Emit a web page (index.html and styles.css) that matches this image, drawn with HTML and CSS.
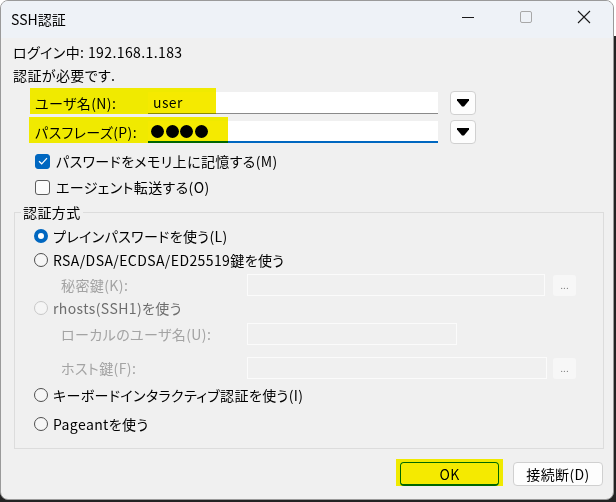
FILE: index.html
```html
<!DOCTYPE html>
<html lang="ja">
<head>
<meta charset="utf-8">
<title>SSH認証</title>
<link rel="stylesheet" href="styles.css">
</head>
<body>
<div class="window">
  <div class="titlebar">
    <span class="title">SSH認証</span>
    <div class="controls">
      <div class="ctl"><svg width="14" height="14" viewBox="0 0 14 14"><path d="M1 7.5H13" stroke="#1a1a1a" stroke-width="1"/></svg></div>
      <div class="ctl"><svg width="14" height="14" viewBox="0 0 14 14"><rect x="1.5" y="1.5" width="11" height="11" rx="1.5" fill="none" stroke="#a8a8a8" stroke-width="1"/></svg></div>
      <div class="ctl"><svg width="14" height="14" viewBox="0 0 14 14"><path d="M1 1L13 13M13 1L1 13" stroke="#1a1a1a" stroke-width="1.1"/></svg></div>
    </div>
  </div>
  <div class="content">
    <div class="line">ログイン中: 192.168.1.183</div>
    <div class="line">認証が必要です.</div>

    <div class="field-row">
      <span class="mark mark-user"></span>
      <span class="flabel">ユーザ名(N):</span>
      <div class="input">user</div>
      <div class="drop"><svg width="12" height="8" viewBox="0 0 12 8"><path d="M0 0H12V1.5L7 7.5H5L0 1.5Z" fill="#000"/></svg></div>
    </div>
    <div class="field-row row2">
      <span class="mark mark-pass"></span>
      <span class="flabel">パスフレーズ(P):</span>
      <div class="input focused"><span class="dot"></span><span class="dot"></span><span class="dot"></span><span class="dot"></span></div>
      <div class="drop"><svg width="12" height="8" viewBox="0 0 12 8"><path d="M0 0H12V1.5L7 7.5H5L0 1.5Z" fill="#000"/></svg></div>
    </div>

    <div class="check-row first">
      <span class="box checked"><svg width="10" height="8" viewBox="0 0 10 8"><path d="M1 4.2L3.7 6.8L9 1.2" fill="none" stroke="#fff" stroke-width="1.2"/></svg></span>
      <span>パスワードをメモリ上に記憶する(M)</span>
    </div>
    <div class="check-row">
      <span class="box"></span>
      <span>エージェント転送する(O)</span>
    </div>

    <fieldset class="group">
      <legend>認証方式</legend>
      <div class="opt r1"><span class="radio on"></span><span>プレインパスワードを使う(L)</span></div>
      <div class="opt r2"><span class="radio"></span><span>RSA/DSA/ECDSA/ED25519鍵を使う</span></div>
      <div class="sub r3"><span class="slabel">秘密鍵(K):</span><div class="dis-input wide"></div><div class="dots-btn">...</div></div>
      <div class="opt r4 disabled"><span class="radio off"></span><span>rhosts(SSH1)を使う</span></div>
      <div class="sub r5"><span class="slabel">ローカルのユーザ名(U):</span><div class="dis-input short"></div></div>
      <div class="sub r6"><span class="slabel">ホスト鍵(F):</span><div class="dis-input wide2"></div><div class="dots-btn">...</div></div>
      <div class="opt r7"><span class="radio"></span><span>キーボードインタラクティブ認証を使う(I)</span></div>
      <div class="opt r8"><span class="radio"></span><span>Pageantを使う</span></div>
    </fieldset>

    <div class="buttons">
      <div class="ok-wrap">
        <span class="mark mark-ok"></span>
        <div class="btn ok">OK</div>
      </div>
      <div class="btn">接続断(D)</div>
    </div>
  </div>
</div>
</body>
</html>
```

FILE: styles.css
```css
html, body {
  margin: 0;
  padding: 0;
}
body {
  width: 616px;
  height: 502px;
  background: linear-gradient(#ffffff 0, #ffffff 36px, #232323 36px);
  font-family: "Noto Sans CJK JP", sans-serif;
  font-size: 14px;
  color: #000;
  overflow: hidden;
}
.window {
  box-sizing: border-box;
  width: 614px;
  height: 500px;
  background: #f0f0f0;
  border: 1px solid #9a9a9a;
  border-radius: 8px;
  overflow: hidden;
  display: flex;
  flex-direction: column;
}
.titlebar {
  height: 37px;
  flex: 0 0 37px;
  background: #eef2f7;
  display: flex;
  align-items: center;
}
.title {
  padding-left: 10px;
  font-size: 14px;
  line-height: 20px;
  margin-top: -2px;
}
.controls {
  margin-left: auto;
  display: flex;
  height: 100%;
}
.ctl {
  width: 58px;
  display: flex;
  align-items: center;
  justify-content: center;
  margin-top: -6px;
}
.content {
  padding: 3px 0 0 12px;
  font-feature-settings: "palt";
  letter-spacing: 0.4px;
}
.line {
  height: 23px;
  line-height: 23px;
}
.field-row {
  position: relative;
  display: flex;
  align-items: center;
  height: 22px;
  margin-top: 5px;
}
.field-row.row2 {
  margin-top: 7px;
}
.flabel {
  width: 113px;
  padding-left: 22px;
  flex: 0 0 auto;
  position: relative;
  z-index: 1;
}
.input {
  box-sizing: border-box;
  width: 290px;
  height: 22px;
  background: #fff;
  border-bottom: 1px solid #8a8a8a;
  padding-left: 5px;
  line-height: 21px;
  display: flex;
  align-items: center;
}
.input.focused {
  border-bottom: 2px solid #0067c0;
  padding-left: 3px;
  gap: 1.5px;
}
.dot {
  width: 13px;
  height: 13px;
  border-radius: 50%;
  background: #000;
}
.drop {
  box-sizing: border-box;
  width: 26px;
  height: 24px;
  margin-left: 12px;
  border: 1px solid #d0d0d0;
  border-radius: 4px;
  background: #fdfdfd;
  display: flex;
  align-items: center;
  justify-content: center;
}
.mark {
  position: absolute;
  background: #f5ea00;
  mix-blend-mode: darken;
  z-index: 2;
  pointer-events: none;
}
.mark-user {
  left: 17px;
  top: -4px;
  width: 186px;
  height: 26px;
}
.mark-pass {
  left: 16px;
  top: -4px;
  width: 199px;
  height: 26px;
}
.check-row {
  display: flex;
  align-items: center;
  height: 26px;
  padding-left: 22px;
  gap: 6px;
}
.check-row.first {
  margin-top: 5px;
}
.box {
  box-sizing: border-box;
  width: 15px;
  height: 15px;
  border: 1px solid #5c5c5c;
  border-radius: 3px;
  background: #fbfbfb;
  display: flex;
  align-items: center;
  justify-content: center;
}
.box.checked {
  background: #0067c0;
  border-color: #0067c0;
}
.group {
  box-sizing: border-box;
  width: 590px;
  margin: 3px 0 0 1px;
  padding: 0 0 12px 0;
  border: 1px solid #dcdcdc;
  border-radius: 0;
}
.group legend {
  margin-left: 6px;
  padding: 0 2px;
  line-height: 18px;
}
.opt {
  display: flex;
  align-items: center;
  height: 24px;
  padding-left: 19px;
  gap: 5px;
}
.radio {
  box-sizing: border-box;
  width: 14px;
  height: 14px;
  border-radius: 50%;
  border: 1px solid #4f4f4f;
  background: #f6f6f6;
}
.radio.on {
  border: 4px solid #0067c0;
  background: #fff;
}
.radio.off {
  border-color: #c8c8c8;
  background: #f5f5f5;
}
.opt.disabled {
  color: #6d6d6d;
}
.sub {
  display: flex;
  align-items: center;
  height: 22px;
  color: #a3a3a3;
}
.slabel {
  width: 186px;
  padding-left: 46px;
  flex: 0 0 auto;
}
.dis-input {
  box-sizing: border-box;
  height: 22px;
  border: 1px solid #fbfbfb;
  background: #f0f0f0;
}
.dis-input.wide { width: 298px; }
.dis-input.short { width: 210px; }
.dis-input.wide2 { width: 300px; }
.dots-btn {
  box-sizing: border-box;
  width: 23px;
  height: 21px;
  margin-left: auto;
  margin-right: 27px;
  border-radius: 3px;
  background: #f7f7f7;
  color: #7a7a7a;
  font-size: 10px;
  line-height: 20px;
  text-align: center;
  letter-spacing: 0;
}
.r1 { margin-top: 3px; }
.r3 { margin-top: 2px; }
.r5 { margin-top: 3px; }
.r6 { margin-top: 12px; }
.r7 { margin-top: 4px; }
.r8 { margin-top: 5px; }
.buttons {
  display: flex;
  justify-content: flex-end;
  align-items: center;
  gap: 14px;
  margin-top: 13px;
  padding-right: 10px;
}
.ok-wrap {
  position: relative;
}
.mark-ok {
  left: -4px;
  top: -3px;
  width: 107px;
  height: 27px;
}
.btn {
  box-sizing: border-box;
  width: 90px;
  height: 24px;
  border: 1px solid #d0d0d0;
  border-radius: 4px;
  background: #fdfdfd;
  text-align: center;
  line-height: 22px;
}
.btn.ok {
  width: 99px;
  border-color: #0067c0;
  border-bottom-width: 2px;
}
```
